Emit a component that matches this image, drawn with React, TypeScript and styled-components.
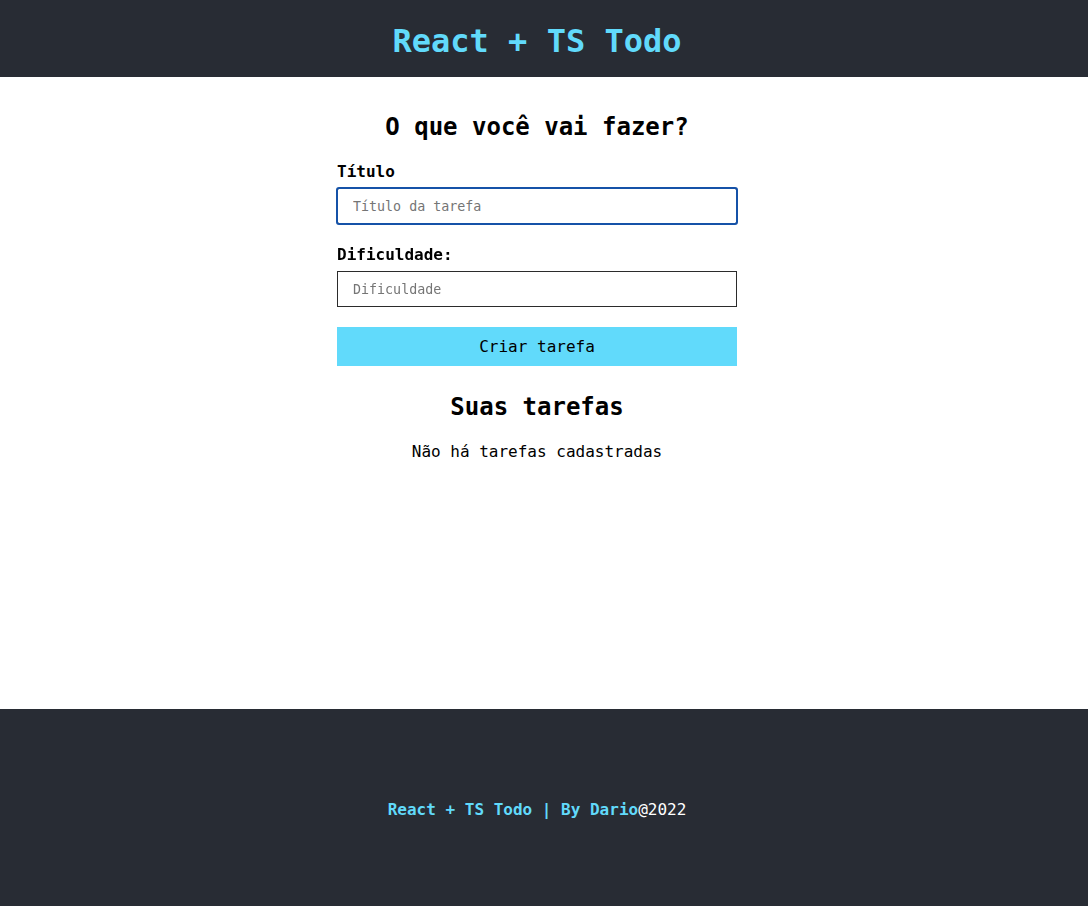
import styled, { createGlobalStyle } from "styled-components";

const FONT = `"DejaVu Sans Mono", "Liberation Mono", monospace`;

const GlobalStyle = createGlobalStyle`
  * {
    box-sizing: border-box;
  }

  body {
    margin: 0;
    background-color: #fff;
    font-family: ${FONT};
  }
`;

const App = () => {
  return (
    <>
      <GlobalStyle />
      <Page>
        <Header>
          <Brand>React + TS Todo</Brand>
        </Header>
        <Main>
          <Heading>O que você vai fazer?</Heading>
          <Form onSubmit={(e) => e.preventDefault()}>
            <Field>
              <Label htmlFor="title">Título</Label>
              <Input id="title" type="text" placeholder="Título da tarefa" autoFocus />
            </Field>
            <Field>
              <Label htmlFor="difficulty">Dificuldade:</Label>
              <Input id="difficulty" type="text" placeholder="Dificuldade" />
            </Field>
            <SubmitButton type="submit">Criar tarefa</SubmitButton>
          </Form>
          <ListTitle>Suas tarefas</ListTitle>
          <EmptyText>Não há tarefas cadastradas</EmptyText>
        </Main>
        <Footer>
          <FooterText>
            <span>React + TS Todo | By Dario</span>
            <Year>@2022</Year>
          </FooterText>
        </Footer>
      </Page>
    </>
  );
};

export default App;

const Page = styled.div`
  display: flex;
  flex-direction: column;
  min-height: 906px;
`;

const Header = styled.header`
  height: 77px;
  padding-right: 14px;

  display: flex;
  align-items: center;
  justify-content: center;

  background-color: #282c34;
`;

const Brand = styled.h1`
  margin: 0;
  padding-top: 4px;

  color: #61dafb;
  font-size: 32px;
  font-weight: 700;
  line-height: 36px;
`;

const Main = styled.main`
  height: 632px;
  padding: 36px 14px 0 0;

  display: flex;
  flex-direction: column;
  align-items: center;
`;

const Heading = styled.h2`
  margin: 0 0 21px;

  color: #000;
  font-size: 24px;
  font-weight: 700;
  line-height: 28px;
`;

const Form = styled.form`
  width: 400px;

  display: flex;
  flex-direction: column;
`;

const Field = styled.div`
  margin-bottom: 21px;

  display: flex;
  flex-direction: column;
  gap: 6px;

  &:nth-of-type(2) {
    margin-bottom: 20px;
  }
`;

const Label = styled.label`
  color: #000;
  font-size: 16px;
  font-weight: 700;
  line-height: 20px;
`;

const Input = styled.input`
  width: 100%;
  height: 36px;
  padding: 0 15px;

  border: 1px solid #2b2b2b;
  border-radius: 0;
  background-color: #fff;

  font-family: ${FONT};
  font-size: 13.33px;
  color: #000;

  &::placeholder {
    color: #757575;
  }

  &:focus {
    outline: 2px solid #1552a8;
    outline-offset: -1px;
    border-radius: 2px;
  }
`;

const SubmitButton = styled.button`
  width: 100%;
  height: 39px;

  border: none;
  background-color: #61dafb;
  cursor: pointer;

  font-family: ${FONT};
  font-size: 16px;
  color: #000;
`;

const ListTitle = styled.h2`
  margin: 27px 0 21px;

  color: #000;
  font-size: 24px;
  font-weight: 700;
  line-height: 28px;
`;

const EmptyText = styled.p`
  margin: 0;

  color: #000;
  font-size: 16px;
  line-height: 20px;
`;

const Footer = styled.footer`
  height: 197px;
  padding: 4px 14px 0 0;

  display: flex;
  align-items: center;
  justify-content: center;

  background-color: #282c34;
`;

const FooterText = styled.p`
  margin: 0;

  color: #61dafb;
  font-size: 16px;
  font-weight: 700;
  line-height: 20px;
`;

const Year = styled.span`
  color: #fff;
  font-weight: 400;
`;
